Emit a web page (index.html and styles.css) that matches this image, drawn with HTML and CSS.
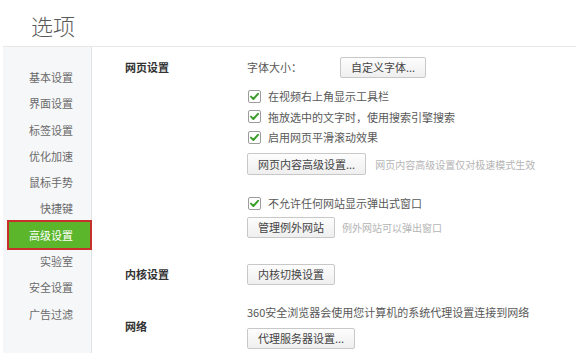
FILE: index.html
```html
<!DOCTYPE html>
<html lang="zh-CN">
<head>
<meta charset="utf-8">
<title>选项</title>
<link rel="stylesheet" href="styles.css">
</head>
<body>
<div class="page">
  <header class="head"><h1 class="title">选项</h1></header>
  <div class="layout">
    <nav class="side">
      <a class="nav-item">基本设置</a>
      <a class="nav-item">界面设置</a>
      <a class="nav-item">标签设置</a>
      <a class="nav-item">优化加速</a>
      <a class="nav-item">鼠标手势</a>
      <a class="nav-item">快捷键</a>
      <a class="nav-item active">高级设置</a>
      <a class="nav-item">实验室</a>
      <a class="nav-item">安全设置</a>
      <a class="nav-item">广告过滤</a>
    </nav>
    <main class="main">
      <section class="sec">
        <h2 class="sec-title">网页设置</h2>
        <div class="sec-body">
          <div class="row font-row"><span class="label">字体大小：</span><button class="btn">自定义字体...</button></div>
          <div class="checks">
            <label class="check"><svg class="box" width="13" height="13" viewBox="0 0 13 13"><rect x="0.5" y="0.5" width="12" height="12" rx="1.5" fill="#fff" stroke="#9c9c9c"/><path d="M3 6.6 L5.4 9 L10 3.8" fill="none" stroke="#3c9e2c" stroke-width="2" stroke-linecap="round" stroke-linejoin="round"/></svg>在视频右上角显示工具栏</label>
            <label class="check"><svg class="box" width="13" height="13" viewBox="0 0 13 13"><rect x="0.5" y="0.5" width="12" height="12" rx="1.5" fill="#fff" stroke="#9c9c9c"/><path d="M3 6.6 L5.4 9 L10 3.8" fill="none" stroke="#3c9e2c" stroke-width="2" stroke-linecap="round" stroke-linejoin="round"/></svg>拖放选中的文字时，使用搜索引擎搜索</label>
            <label class="check"><svg class="box" width="13" height="13" viewBox="0 0 13 13"><rect x="0.5" y="0.5" width="12" height="12" rx="1.5" fill="#fff" stroke="#9c9c9c"/><path d="M3 6.6 L5.4 9 L10 3.8" fill="none" stroke="#3c9e2c" stroke-width="2" stroke-linecap="round" stroke-linejoin="round"/></svg>启用网页平滑滚动效果</label>
          </div>
          <div class="row adv-row"><button class="btn btn-tall">网页内容高级设置...</button><span class="hint">网页内容高级设置仅对极速模式生效</span></div>
          <label class="check popup-check"><svg class="box" width="13" height="13" viewBox="0 0 13 13"><rect x="0.5" y="0.5" width="12" height="12" rx="1.5" fill="#fff" stroke="#9c9c9c"/><path d="M3 6.6 L5.4 9 L10 3.8" fill="none" stroke="#3c9e2c" stroke-width="2" stroke-linecap="round" stroke-linejoin="round"/></svg>不允许任何网站显示弹出式窗口</label>
          <div class="row except-row"><button class="btn">管理例外网站</button><span class="hint hint-near">例外网站可以弹出窗口</span></div>
        </div>
      </section>
      <section class="sec sec-center sec-core">
        <h2 class="sec-title">内核设置</h2>
        <div class="sec-body">
          <button class="btn">内核切换设置</button>
        </div>
      </section>
      <section class="sec sec-center sec-net">
        <h2 class="sec-title">网络</h2>
        <div class="sec-body">
          <p class="desc">360安全浏览器会使用您计算机的系统代理设置连接到网络</p>
          <button class="btn proxy-btn">代理服务器设置...</button>
        </div>
      </section>
    </main>
  </div>
</div>
</body>
</html>
```

FILE: styles.css
```css
* { box-sizing: border-box; margin: 0; padding: 0; }
html, body { background: #fff; }
body {
  font-family: "Noto Sans CJK SC", "Microsoft YaHei", sans-serif;
  font-size: 11px;
  color: #585858;
  width: 576px;
  height: 353px;
  overflow: hidden;
}
.head { height: 46px; padding: 14px 0 0 31px; }
.title { font-size: 22px; line-height: 22px; font-weight: 300; color: #5a5a5a; }
.layout {
  display: flex;
  margin-left: 3px;
  border-top: 1px solid #e8e8e8;
  height: 307px;
}
.side {
  width: 89px;
  flex: none;
  background: #f6f7f9;
  border-right: 1px solid #e2e2e2;
  padding-top: 17px;
  display: flex;
  flex-direction: column;
}
.nav-item {
  height: 26.3px;
  line-height: 26.3px;
  text-align: right;
  padding-right: 18px;
  color: #6a6a6a;
  flex: none;
}
.nav-item.active {
  height: 30px;
  line-height: 26px;
  margin: -1.85px -1px -1.85px 4px;
  background: #5bb62b;
  border: 2px solid #c8312b;
  color: #fff;
  padding-right: 17px;
  position: relative;
}
.main { flex: 1; padding: 9px 0 0 33px; }
.sec { display: grid; grid-template-columns: 122px 1fr; align-items: start; }
.sec-center { align-items: center; }
.sec-title { font-size: 11px; font-weight: 700; color: #333; line-height: 22px; }
.sec-body { display: flex; flex-direction: column; align-items: flex-start; }
.row { display: flex; align-items: center; }
.font-row { height: 22px; }
.label { width: 93px; }
.btn {
  height: 21px;
  padding: 0 10px;
  border: 1px solid #c8c8c8;
  border-radius: 2px;
  background: linear-gradient(#fdfdfd, #efefef);
  font: inherit;
  color: #444;
  line-height: 19px;
}
.btn-tall { height: 22px; line-height: 20px; }
.checks { margin-top: 8px; display: flex; flex-direction: column; }
.check { display: flex; align-items: center; height: 20.5px; }
.box { margin: 0 7px 0 1px; flex: none; }
.adv-row { margin-top: 5.5px; }
.hint { font-size: 10px; color: #b4b4b4; margin-left: 9px; }
.hint-near { margin-left: 7px; }
.popup-check { margin-top: 18px; }
.except-row { margin-top: 3.5px; }
.sec-core { margin-top: 25px; }
.sec-net { margin-top: 18px; }
.desc { line-height: 18px; }
.proxy-btn { margin-top: 7px; }
```
